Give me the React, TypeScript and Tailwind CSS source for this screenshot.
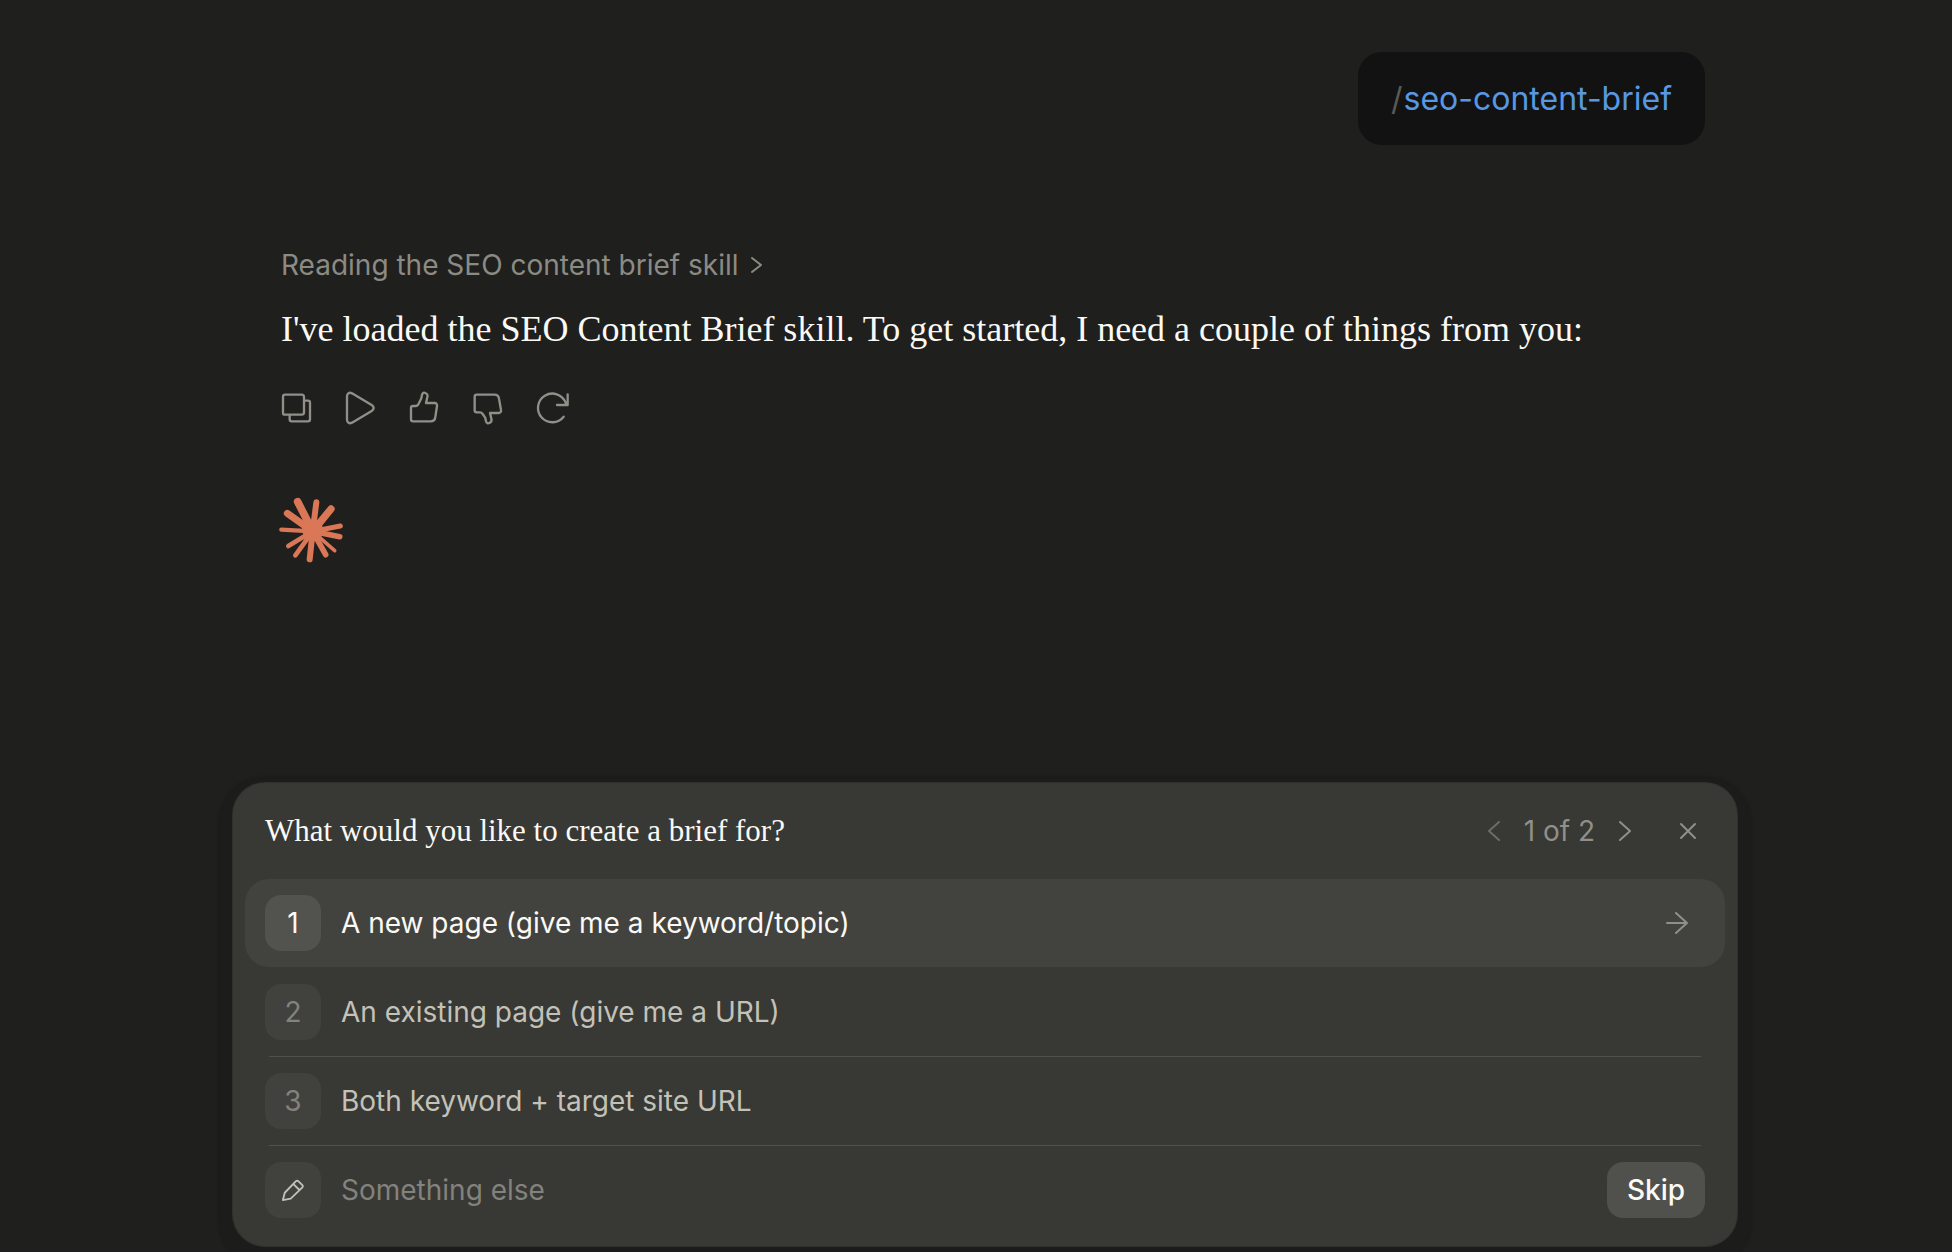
import { useState } from 'react';

const options = [
  { id: 1, label: 'A new page (give me a keyword/topic)' },
  { id: 2, label: 'An existing page (give me a URL)' },
  { id: 3, label: 'Both keyword + target site URL' },
];

const iconProps = {
  fill: 'none',
  stroke: 'currentColor',
  strokeLinecap: 'round' as const,
  strokeLinejoin: 'round' as const,
  'aria-hidden': true,
};

const actions = [
  {
    label: 'Copy',
    viewBox: '34 36 96 96',
    path: 'M46 44h50a7 7 0 0 1 7 7v46a7 7 0 0 1-7 7H46a6 6 0 0 1-6-6V50a6 6 0 0 1 6-6zM103 62h12a6 6 0 0 1 6 6v50a6 6 0 0 1-6 6H66a6 6 0 0 1-6-6v-14',
  },
  {
    label: 'Read aloud',
    viewBox: '226 36 96 96',
    path: 'M232 49v70c0 9 7 13 15 9l59-35c8-5 8-13 0-18l-59-35c-8-4-15 0-15 9z',
  },
  {
    label: 'Good response',
    viewBox: '418 36 96 96',
    path: 'M430 78h8c4 0 6-2 8-5l8-16c2-4 2-9 3-13 2-6 6-7 10-5 6 2 8 7 6 13l-4 17h26c5 0 8 4 7 9l-5 33c-1 9-6 13-14 13h-53c-4 0-6-2-6-6V84c0-4 2-6 6-6z',
  },
  {
    label: 'Bad response',
    viewBox: '610 36 96 96',
    path: 'M621 44h53c8 0 13 4 14 12l6 34c1 5-2 9-7 9h-26l4 17c2 6 0 11-6 13-4 2-8 1-10-5-1-4-1-8-3-12l-7-10c-2-3-4-5-8-5h-10c-4 0-6-2-6-6V50c0-4 2-6 6-6z',
  },
  {
    label: 'Retry',
    viewBox: '802 36 96 96',
    path: 'M882 110A43 43 0 1 1 888 68L894 75M894 43v32h-32',
  },
];

// Outer end of every ray and its thickness; all rays start at the centre
const rays = [
  { x: 83, y: 49, width: 23 },
  { x: 139, y: 51, width: 18 },
  { x: 183, y: 71, width: 22 },
  { x: 211, y: 122, width: 15 },
  { x: 209, y: 154, width: 17 },
  { x: 194, y: 196, width: 11 },
  { x: 167, y: 208, width: 17 },
  { x: 119, y: 222, width: 18 },
  { x: 76, y: 210, width: 14 },
  { x: 55, y: 182, width: 14 },
  { x: 34, y: 133, width: 13 },
  { x: 52, y: 84, width: 21 },
];

const Starburst = () => (
  <svg viewBox="33 38 192 192" className="h-16 w-16 overflow-visible text-[#d97757]" role="img" aria-label="Assistant">
    <g stroke="currentColor" strokeLinecap="round">
      {rays.map((ray) => (
        <line key={`${ray.x}-${ray.y}`} x1="128" y1="138" x2={ray.x} y2={ray.y} strokeWidth={ray.width} />
      ))}
    </g>
    <path d="M112 108L132 107L156 110L158 134L156 148L150 166L128 168L106 162L98 142L96 120z" fill="currentColor" />
  </svg>
);

const App = () => {
  const [selected, setSelected] = useState(1);
  const [custom, setCustom] = useState('');

  return (
    <div className="flex min-h-screen flex-col bg-[#1f1f1e] pt-[52px] pb-[6px] pl-[18px] font-['Inter','Liberation_Sans',sans-serif] text-[#faf9f5]">
      <main className="mx-auto flex w-full max-w-[1504px] flex-1 flex-col">
        {/* Conversation */}
        <div className="flex flex-col pr-8 pl-12">
          <div className="self-end rounded-3xl bg-[#121212] px-[33px] py-[22px] text-[32px] leading-[49px]">
            <span className="mr-px text-[#5a5954]">/</span>
            <span className="text-[#5898e2]">seo-content-brief</span>
          </div>

          <button
            type="button"
            className="mt-[100px] flex cursor-pointer items-center gap-3 self-start text-[28px] leading-10 text-[#8c8b83]"
          >
            Reading the SEO content brief skill
            <svg {...iconProps} viewBox="0 0 12 18" strokeWidth="2" className="h-[18px] w-3">
              <path d="M1 2l9 7-9 7" />
            </svg>
          </button>

          <p className="mt-5 font-['Liberation_Serif',serif] text-[36px] leading-[48px]">
            I've loaded the SEO Content Brief skill. To get started, I need a couple of things from you:
          </p>

          <div className="mt-[39px] flex gap-8 text-[#918f88]">
            {actions.map((action) => (
              <button key={action.label} type="button" aria-label={action.label} className="cursor-pointer">
                <svg {...iconProps} viewBox={action.viewBox} strokeWidth="7" className="h-8 w-8 overflow-visible">
                  <path d={action.path} />
                </svg>
              </button>
            ))}
          </div>

          <div className="mt-[74px]">
            <Starburst />
          </div>
        </div>

        {/* Question card */}
        <section className="mt-auto rounded-[32px] bg-[#383834] px-3 pb-3 shadow-[0_0_0_1px_#30302d,0_8px_2px_15px_#1c1c1b]">
          <header className="flex h-24 items-center justify-between pr-7 pl-5">
            <h2 className="font-['Liberation_Serif',serif] text-[31px] leading-10">
              What would you like to create a brief for?
            </h2>
            <div className="flex items-center text-[#918f88]">
              <button type="button" aria-label="Previous question" disabled className="text-[#6d6c67]">
                <svg {...iconProps} viewBox="0 0 12 20" strokeWidth="2" className="h-5 w-3">
                  <path d="M11 1L1 10l10 9" />
                </svg>
              </button>
              <span className="mx-6 text-[28px] leading-10">1 of 2</span>
              <button type="button" aria-label="Next question" className="cursor-pointer">
                <svg {...iconProps} viewBox="0 0 12 20" strokeWidth="2" className="h-5 w-3">
                  <path d="M1 1l10 9-10 9" />
                </svg>
              </button>
              <button type="button" aria-label="Close" className="ml-12 cursor-pointer">
                <svg {...iconProps} viewBox="0 0 18 18" strokeWidth="2" className="h-[18px] w-[18px]">
                  <path d="M2 2l14 14M16 2L2 16" />
                </svg>
              </button>
            </div>
          </header>

          <ul>
            {options.map((option) => {
              const active = option.id === selected;
              return (
                <li key={option.id}>
                  <button
                    type="button"
                    onClick={() => setSelected(option.id)}
                    className={`flex h-[88px] w-full cursor-pointer items-center gap-5 rounded-3xl pr-[37px] pl-5 text-left text-[28px] leading-10 ${
                      active ? 'bg-[#42423e] text-[#faf9f5]' : 'text-[#c3c2b9]'
                    }`}
                  >
                    <span
                      className={`flex h-14 w-14 items-center justify-center rounded-2xl ${
                        active ? 'bg-[#52524e]' : 'bg-[#41413d] text-[#83827d]'
                      }`}
                    >
                      {option.id}
                    </span>
                    <span className="flex-1">{option.label}</span>
                    {active && (
                      <svg {...iconProps} viewBox="0 0 22 22" strokeWidth="2" className="h-[22px] w-[22px] text-[#918f88]">
                        <path d="M1 11h20M10 1l11 10-11 10" />
                      </svg>
                    )}
                  </button>
                  <div className={`mx-6 h-px ${active ? 'bg-transparent' : 'bg-[#50504c]'}`} />
                </li>
              );
            })}
          </ul>

          <div className="flex h-[88px] items-center gap-5 px-5">
            <label
              htmlFor="custom-answer"
              aria-label="Something else"
              className="flex h-14 w-14 items-center justify-center rounded-2xl bg-[#41413d] text-[#c3c2b9]"
            >
              <svg {...iconProps} viewBox="0 0 24 24" strokeWidth="2" className="h-[22px] w-[22px]">
                <path d="M1 23l2-8L15 2.500c1-1 2-1 3 0l4 4c1 1 1 2 0 3L9.500 21.500l-8.500 1.500zM12.500 5.500l6.500 6.500" />
              </svg>
            </label>
            <input
              id="custom-answer"
              type="text"
              value={custom}
              onChange={(e) => setCustom(e.target.value)}
              placeholder="Something else"
              className="min-w-0 flex-1 bg-transparent text-[28px] leading-10 outline-none placeholder:text-[#83827d]"
            />
            <button
              type="button"
              className="h-14 cursor-pointer rounded-2xl bg-[#50504c] px-5 text-[28px] leading-10 font-medium"
            >
              Skip
            </button>
          </div>
        </section>
      </main>
    </div>
  );
};

export default App;
